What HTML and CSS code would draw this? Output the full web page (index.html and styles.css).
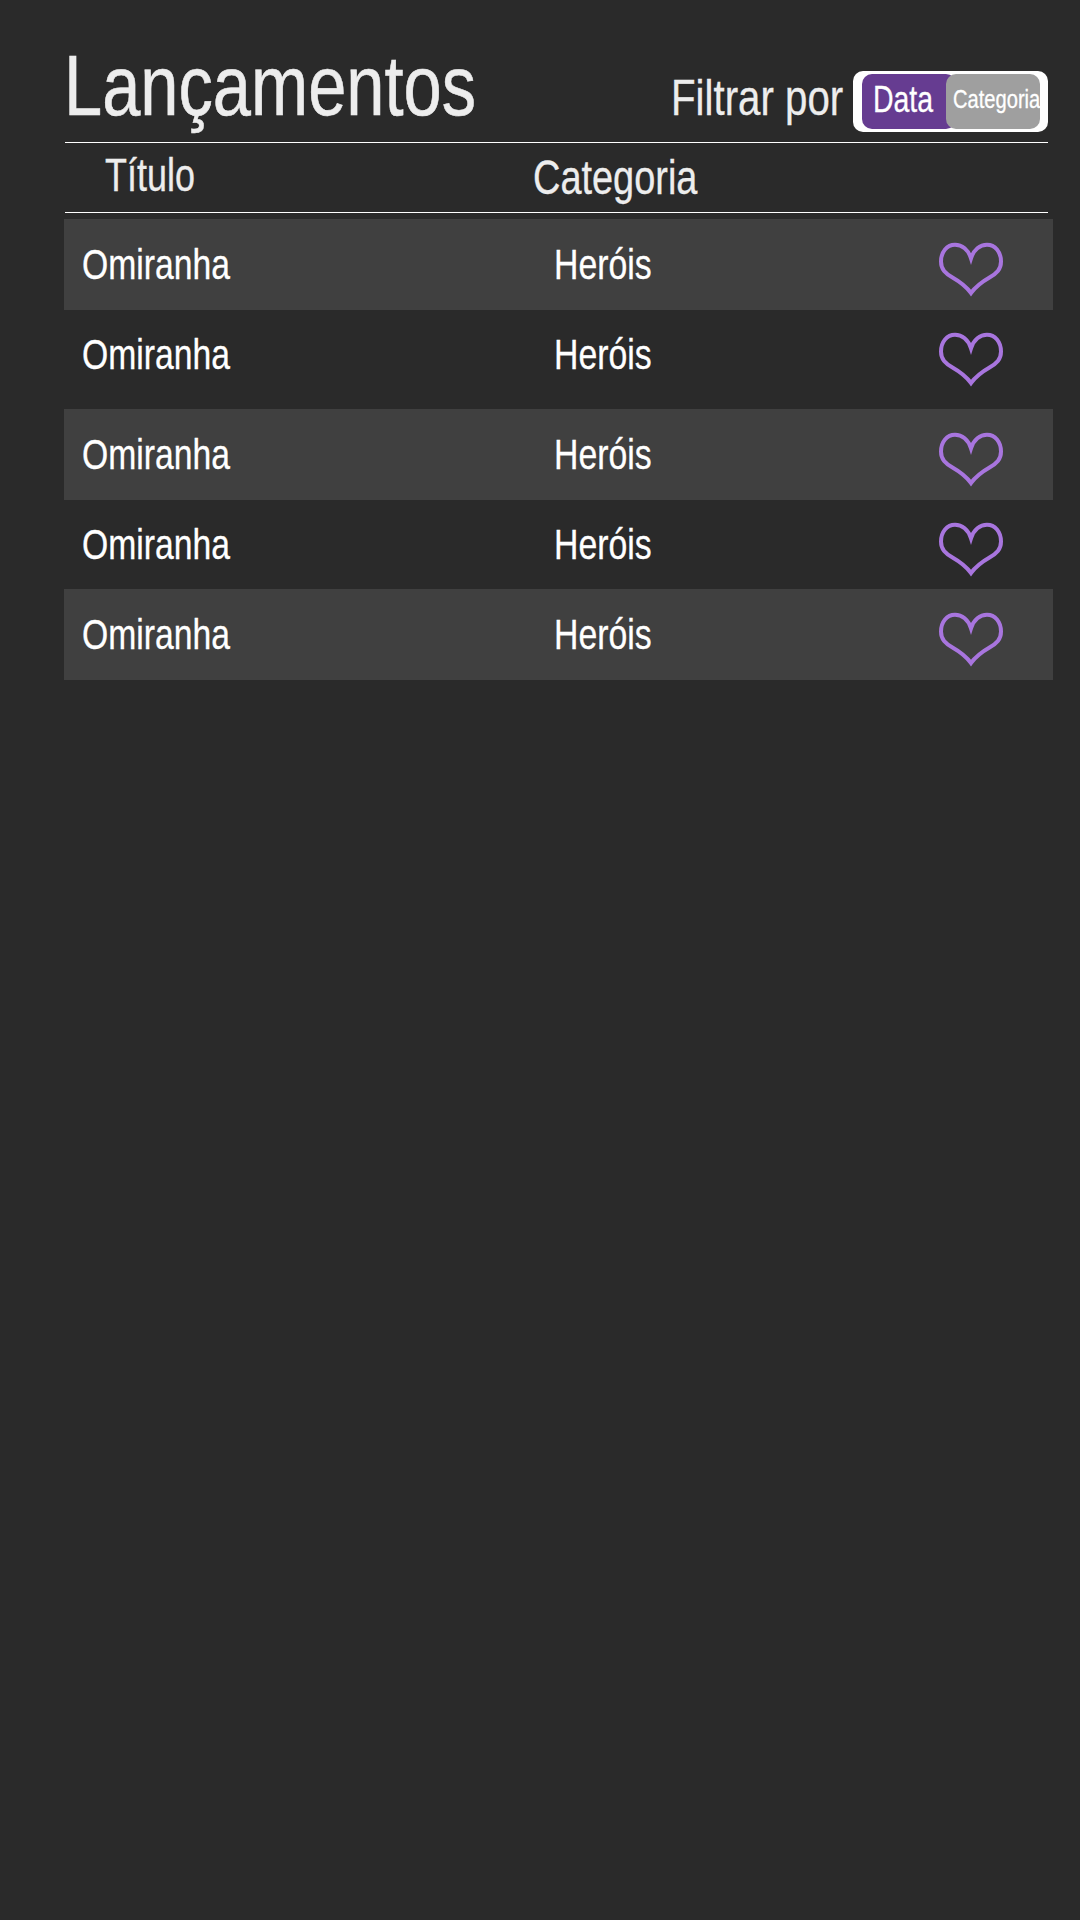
FILE: index.html
```html
<!DOCTYPE html>
<html lang="pt">
<head>
<meta charset="utf-8">
<title>Lançamentos</title>
<link rel="stylesheet" href="styles.css">
</head>
<body>
<svg class="defs" aria-hidden="true">
  <symbol id="heart" viewBox="0 0 64 56">
    <path d="M32 16.300C29.300 7.700 23 2.700 16 2.700C8 2.700 2 9.800 2 19.500C2 27.500 6.500 31.500 13.500 35.500C21 39.800 26.500 43.500 32 51C37.500 43.500 43 39.800 50.500 35.500C57.500 31.500 62 27.500 62 19.500C62 9.800 56 2.700 48 2.700C41 2.700 34.700 7.700 32 16.300Z" fill="none" stroke="#a875de" stroke-width="4"/>
  </symbol>
</svg>
<main class="page">
  <header class="top">
    <h1 class="title">Lançamentos</h1>
    <span class="filter-label">Filtrar por</span>
    <div class="toggle">
      <button class="option option-date"><span class="date-text">Data</span></button>
      <button class="option option-category"><span class="category-text">Categoria</span></button>
    </div>
  </header>
  <div class="columns">
    <span class="column-title">Título</span>
    <span class="column-category">Categoria</span>
  </div>
  <section class="list">
    <div class="row shaded"><span class="name">Omiranha</span><span class="genre">Heróis</span><svg class="heart"><use href="#heart"/></svg></div>
    <div class="row"><span class="name">Omiranha</span><span class="genre">Heróis</span><svg class="heart"><use href="#heart"/></svg></div>
    <div class="row shaded spaced"><span class="name">Omiranha</span><span class="genre">Heróis</span><svg class="heart"><use href="#heart"/></svg></div>
    <div class="row"><span class="name">Omiranha</span><span class="genre">Heróis</span><svg class="heart"><use href="#heart"/></svg></div>
    <div class="row shaded"><span class="name">Omiranha</span><span class="genre">Heróis</span><svg class="heart"><use href="#heart"/></svg></div>
  </section>
</main>
</body>
</html>
```
FILE: styles.css
```css
* {
  box-sizing: border-box;
}

body {
  margin: 0;
  min-height: 1920px;
  background: #2a2a2a;
  color: #ededed;
  font-family: "Liberation Sans", Arial, sans-serif;
}

.defs {
  display: none;
}

.page {
  padding: 45px 27px 0 64px;
}

/* Condensed lettering: each label is narrowed from its left edge. */
.title,
.filter-label,
.date-text,
.category-text,
.column-title,
.column-category,
.name,
.genre {
  display: block;
  white-space: nowrap;
  transform-origin: 0 50%;
  -webkit-text-stroke: .3px currentColor;
}

.top {
  display: grid;
  grid-template-columns: 606px 182px 195px;
  align-items: start;
  width: 983px;
  height: 98px;
  margin-left: 1px;
  border-bottom: 1px solid #fff;
}

.title {
  margin: -1px 0 0 -1px;
  font-size: 86px;
  font-weight: 400;
  line-height: 82px;
  transform: scaleX(.798);
  -webkit-text-stroke-width: .6px;
}

.filter-label {
  margin-top: 33px;
  font-size: 50.5px;
  line-height: 40px;
  transform: scaleX(.797);
}

.toggle {
  display: flex;
  width: 195px;
  height: 61px;
  margin-top: 26px;
  padding: 3px 8px 3px 9px;
  border-radius: 10px;
  background: #fff;
}

.option {
  flex: none;
  height: 55px;
  padding: 0;
  border: 0;
  border-radius: 10px;
  color: #fff;
  font-family: inherit;
  text-align: left;
}

.option-date {
  width: 94px;
  padding-left: 11px;
  background: #663c91;
}

.option-category {
  width: 94px;
  margin-left: -10px;
  padding-left: 7px;
  background: #9f9f9f;
}

.date-text {
  width: 72px;
  margin-top: -4px;
  font-size: 36px;
  line-height: 40px;
  transform: scaleX(.79);
}

.category-text {
  width: 87px;
  margin-top: -5px;
  font-size: 25px;
  line-height: 30px;
  transform: scaleX(.805);
}

.columns {
  display: grid;
  grid-template-columns: 428px 1fr;
  align-items: center;
  width: 983px;
  height: 70px;
  margin-left: 1px;
  padding-left: 40px;
  border-bottom: 1px solid #fff;
}

.column-title {
  padding-bottom: 4px;
  font-size: 45.5px;
  line-height: 54px;
  transform: scaleX(.79);
}

.column-category {
  padding-bottom: 2px;
  font-size: 48.5px;
  line-height: 54px;
  transform: scaleX(.782);
}

.list {
  padding-top: 6px;
}

.row {
  display: grid;
  grid-template-columns: 471px 385px 1fr;
  align-items: center;
  height: 91px;
  padding-left: 19px;
  color: #fff;
}

.row + .row {
  margin-top: -1px;
}

.row.spaced {
  margin-top: 9px;
}

.shaded {
  background: #404040;
}

.name,
.genre {
  font-size: 42.5px;
  line-height: 49px;
}

.name {
  transform: translateX(-1px) scaleX(.793);
}

.genre {
  transform: scaleX(.795);
}

.heart {
  width: 64px;
  height: 56px;
  margin-top: 11px;
}
```
